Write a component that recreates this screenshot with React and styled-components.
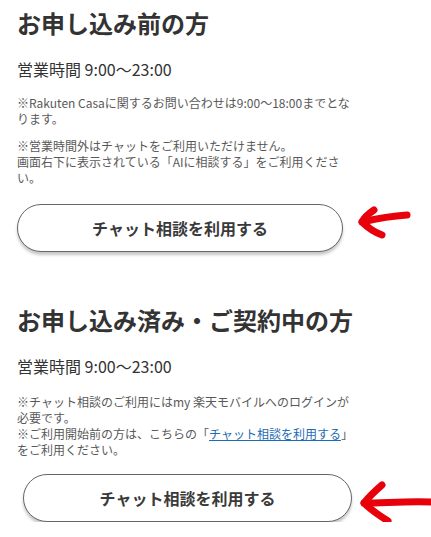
import React from "react";
import styled, { createGlobalStyle } from "styled-components";

const Global = createGlobalStyle`
  html, body { margin: 0; padding: 0; background: #fff; }
  body {
    font-family: "Noto Sans CJK JP", "Noto Sans", sans-serif;
    color: #333;
  }
`;

const Page = styled.main`
  width: 431px;
  padding: 5px 0 0 17px;
  box-sizing: border-box;
  overflow: hidden;
`;

const Section = styled.section`
  width: 335px;
  margin-top: ${(p) => p.$top || 0}px;
`;

const Heading = styled.h2`
  margin: 0;
  font-size: 24px;
  line-height: 36px;
  font-weight: 700;
  color: #333;
  white-space: nowrap;
`;

const Hours = styled.p`
  margin: 16px 0 0;
  font-size: 16px;
  line-height: 24px;
  color: #333;
`;

const Notes = styled.div`
  margin-top: ${(p) => p.$top}px;
  display: flex;
  flex-direction: column;
  gap: 11px;
`;

const Note = styled.p`
  margin: 0;
  font-size: 12px;
  line-height: 16px;
  color: #595959;
`;

const Link = styled.a`
  color: #1d6bb3;
  text-decoration: underline;
`;

const ButtonRow = styled.div`
  display: flex;
  align-items: flex-start;
  width: 414px;
  margin-top: ${(p) => p.$top}px;
`;

const ChatButton = styled.button`
  flex: none;
  width: ${(p) => p.$width}px;
  height: 48px;
  margin-left: ${(p) => p.$offset || 0}px;
  border: 1px solid #666;
  border-radius: 24px;
  background: #fff;
  box-shadow: 0 3px 3px rgba(0, 0, 0, 0.22);
  font-family: "Noto Sans CJK JP", "Noto Sans", sans-serif;
  font-size: 16px;
  font-weight: 700;
  color: #3a3a3a;
  padding: 0;
  cursor: pointer;
`;

const Arrow = styled.svg`
  flex: none;
  margin-left: ${(p) => p.$gap}px;
  overflow: visible;
`;

const ArrowOne = () => (
  <Arrow $gap={12} width="60" height="48" viewBox="0 0 60 48">
    <g fill="none" stroke="#e8000b" strokeWidth="7" strokeLinecap="round" strokeLinejoin="round">
      <path d="M7 18 C 20 15, 36 12, 52 11" />
      <path d="M19 6 C 13 10, 9 14, 7 18 C 12 23, 19 28, 27 31" />
    </g>
  </Arrow>
);

const ArrowTwo = () => (
  <Arrow $gap={3} width="76" height="48" viewBox="0 0 76 48">
    <g fill="none" stroke="#e8000b" strokeWidth="7" strokeLinecap="round" strokeLinejoin="round">
      <path d="M9 29 C 30 29, 50 27, 78 28" />
      <path d="M27 11 C 20 17, 13 24, 9 29 C 16 36, 25 42, 33 47" />
    </g>
  </Arrow>
);

export default function App() {
  return (
    <>
      <Global />
      <Page>
        <Section>
          <Heading>お申し込み前の方</Heading>
          <Hours>営業時間 9:00〜23:00</Hours>
          <Notes $top={14}>
            <Note>※Rakuten Casaに関するお問い合わせは9:00〜18:00までとなります。</Note>
            <Note>
              ※営業時間外はチャットをご利用いただけません。
              <br />
              画面右下に表示されている「AIに相談する」をご利用ください。
            </Note>
          </Notes>
          <ButtonRow $top={18}>
            <ChatButton $width={326}>チャット相談を利用する</ChatButton>
            <ArrowOne />
          </ButtonRow>
        </Section>
        <Section $top={50}>
          <Heading>お申し込み済み・ご契約中の方</Heading>
          <Hours>営業時間 9:00〜23:00</Hours>
          <Notes $top={16}>
            <Note>
              ※チャット相談のご利用にはmy 楽天モバイルへのログインが必要です。
              <br />
              ※ご利用開始前の方は、こちらの「<Link href="#">チャット相談を利用する</Link>」をご利用ください。
            </Note>
          </Notes>
          <ButtonRow $top={16}>
            <ChatButton $width={329} $offset={6}>チャット相談を利用する</ChatButton>
            <ArrowTwo />
          </ButtonRow>
        </Section>
      </Page>
    </>
  );
}
